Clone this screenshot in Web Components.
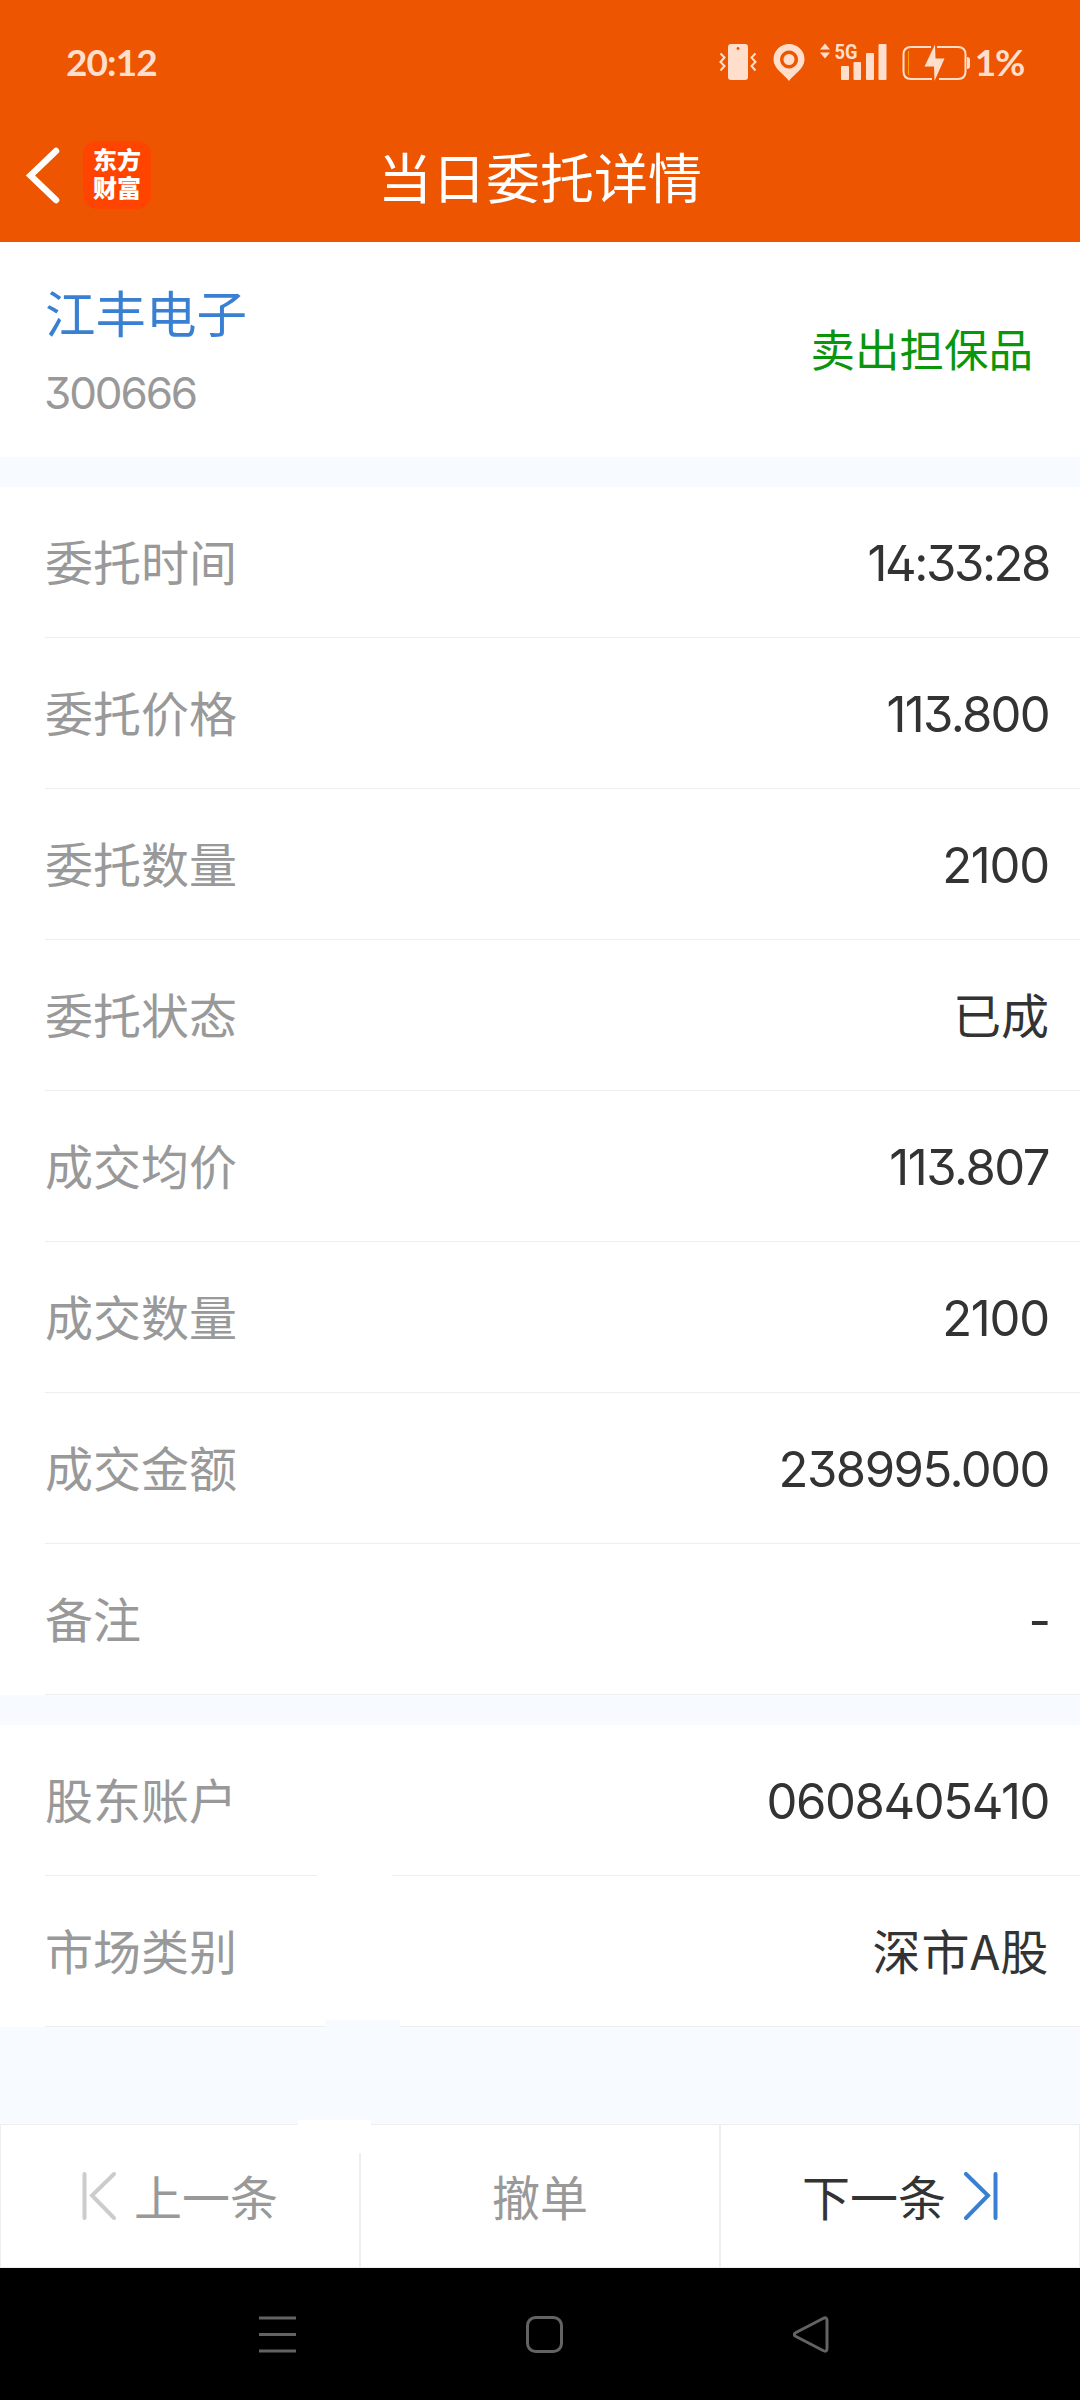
<!DOCTYPE html>
<html lang="zh-CN">
<head>
<meta charset="utf-8">
<title>当日委托详情</title>
<style>
  html, body {
    margin: 0;
    padding: 0;
  }
  body {
    width: 1080px;
    height: 2400px;
    overflow: hidden;
    background: #f7faff;
    font-family: Inter, "Noto Sans CJK SC", sans-serif;
    color: #333;
  }
</style>
</head>
<body>
<order-page>
  <status-bar slot="top" time="20:12" battery="1%"></status-bar>
  <title-bar slot="top">当日委托详情</title-bar>

  <stock-card code="300666">
    江丰电子
    <span slot="side">卖出担保品</span>
  </stock-card>

  <detail-group>
    <detail-row label="委托时间" tracking="-2.4">14:33:28</detail-row>
    <detail-row label="委托价格" tracking="-1.7">113.800</detail-row>
    <detail-row label="委托数量" tracking="-1.2">2100</detail-row>
    <detail-row label="委托状态" cjk>已成</detail-row>
    <detail-row label="成交均价" tracking="-1.5">113.807</detail-row>
    <detail-row label="成交数量" tracking="-1.2">2100</detail-row>
    <detail-row label="成交金额" tracking="-1.5">238995.000</detail-row>
    <detail-row label="备注" tracking="-2">-</detail-row>
  </detail-group>

  <detail-group>
    <detail-row label="股东账户" tracking="-1.4" broken>0608405410</detail-row>
    <detail-row label="市场类别" tracking="0.8" cjk notched>深市A股</detail-row>
  </detail-group>

  <pager-bar slot="bottom"></pager-bar>
  <nav-keys slot="bottom"></nav-keys>
</order-page>

<script>
class OrderPage extends HTMLElement {
  constructor() {
    super();
    this.attachShadow({ mode: "open" });
    this.shadowRoot.innerHTML = `
            <style>
                :host {
                    display: flex;
                    flex-direction: column;
                    width: 1080px;
                    height: 2400px;
                }

                header {
                    background: #ed5500;
                    height: 242px;
                }

                main {
                    flex: 1;
                    display: flex;
                    flex-direction: column;
                    gap: 30px;
                }
            </style>
            <header><slot name="top"></slot></header>
            <main><slot></slot></main>
            <footer><slot name="bottom"></slot></footer>
        `;
  }
}

class StatusBar extends HTMLElement {
  constructor() {
    super();
    this.attachShadow({ mode: "open" });
    this.shadowRoot.innerHTML = `
            <style>
                :host {
                    display: flex;
                    justify-content: space-between;
                    align-items: center;
                    box-sizing: border-box;
                    height: 124px;
                    padding: 0 56px 0 66px;
                    color: #ffdfcc;
                    font: 700 37px/1 Lato, sans-serif;
                }

                .tray {
                    display: flex;
                    align-items: center;
                }

                svg {
                    display: block;
                    overflow: visible;
                    fill: currentColor;
                }

                .line {
                    fill: none;
                    stroke: currentColor;
                    stroke-width: 2;
                }

                .net {
                    font: 700 21px Roboto, sans-serif;
                }

                #time {
                    margin-bottom: 2px;
                    letter-spacing: -0.9px;
                }

                #battery {
                    margin: 0 0 1px 4px;
                    letter-spacing: -1.3px;
                }
            </style>
            <span id="time"></span>
            <div class="tray">
                <svg width="54" height="40" viewBox="718 42 54 40">
                    <path fill-rule="evenodd" d="M730 44h14q3 0 3 3v30q0 3-3 3h-14q-3 0-3-3V47q0-3 3-3zM737 47a1.5 1.5 0 1 0 .1 0z"/>
                    <path class="line" d="M719.500 53.500l4 4-4 4.500 4 4-4 4.500M754.500 53.500l-4 4 4 4.500-4 4 4 4.500"/>
                </svg>
                <svg width="47" height="40" viewBox="772 42 47 40">
                    <path fill-rule="evenodd" d="M788 81C784 75 772.500 69 772.500 59.500a15.500 15.500 0 0 1 31 0C803.500 69 792 75 788 81zM788 50.500a9 9 0 1 0 .1 0z"/>
                    <circle cx="788" cy="59.500" r="5.500"/>
                </svg>
                <svg width="82" height="40" viewBox="819 42 82 40">
                    <path d="M819 49.500l5-6 5 6zM819 52.500h10l-5 6z"/>
                    <text class="net" x="833.500" y="59" textLength="23" lengthAdjust="spacingAndGlyphs">5G</text>
                    <rect x="840" y="66" width="8" height="14" rx="1"/>
                    <rect x="852.500" y="62" width="7.500" height="18" rx="1"/>
                    <rect x="865" y="53" width="8" height="27" rx="1"/>
                    <rect x="877.500" y="44" width="8" height="36" rx="1"/>
                </svg>
                <svg width="69" height="40" viewBox="901 42 69 40">
                    <path class="line" d="M930 47h-20q-7.500 0-7.500 7.500v17q0 7.500 7.500 7.500h21M938 79h19q7.500 0 7.500-7.500v-17q0-7.500-7.500-7.500h-21"/>
                    <path d="M966 57q3 0 3 3v6q0 3-3 3z"/>
                    <path fill="#ffa000" d="M907 51h1v24h-1z"/>
                    <path d="M934 44.500L923.500 66.500H933L933.500 81L943.500 58.500H934.500z"/>
                </svg>
                <span id="battery"></span>
            </div>
        `;
  }

  connectedCallback() {
    this.shadowRoot.querySelector("#time").textContent = this.getAttribute("time");
    this.shadowRoot.querySelector("#battery").textContent = this.getAttribute("battery");
  }
}

class TitleBar extends HTMLElement {
  constructor() {
    super();
    this.attachShadow({ mode: "open" });
    this.shadowRoot.innerHTML = `
            <style>
                :host {
                    display: grid;
                    grid-template-columns: 1fr auto 1fr;
                    align-items: center;
                    height: 104px;
                    color: #fff;
                }

                .left {
                    display: flex;
                    align-items: center;
                    gap: 21px;
                    padding: 0 0 3px 25px;
                }

                .logo {
                    display: flex;
                    flex-direction: column;
                    justify-content: center;
                    align-items: center;
                    box-sizing: border-box;
                    width: 68px;
                    height: 68px;
                    padding-bottom: 3px;
                    border-radius: 14px;
                    background: #ff4400;
                    font: 900 24px/28px "Noto Sans CJK SC", sans-serif;
                }

                h1 {
                    margin: 0 0 1px;
                    font: 400 54px/80px "Noto Sans CJK SC", sans-serif;
                }
            </style>
            <div class="left">
                <svg width="37" height="60" viewBox="25 144 37 60" fill="none" stroke="#fff" stroke-width="6.500" stroke-linecap="round">
                    <path d="M56 150L30.500 174.500L56 199"/>
                </svg>
                <div class="logo"><span>东方</span><span>财富</span></div>
            </div>
            <h1><slot></slot></h1>
        `;
  }
}

class StockCard extends HTMLElement {
  constructor() {
    super();
    this.attachShadow({ mode: "open" });
    this.shadowRoot.innerHTML = `
            <style>
                :host {
                    display: flex;
                    justify-content: space-between;
                    align-items: center;
                    box-sizing: border-box;
                    height: 215px;
                    padding: 0 47px 0 45px;
                    background: #fff;
                }

                .name {
                    margin-top: 5px;
                    font: 400 50.500px/70px "Noto Sans CJK SC", sans-serif;
                    color: #3a80d2;
                }

                #code {
                    margin: 12px 0 0 -1px;
                    font-size: 44px;
                    line-height: 70px;
                    letter-spacing: -2.1px;
                    font-feature-settings: "cv09";
                    color: #999;
                }

                .side {
                    margin-bottom: 3px;
                    font: 400 44.500px/64px "Noto Sans CJK SC", sans-serif;
                    color: #0a960a;
                }
            </style>
            <div>
                <div class="name"><slot></slot></div>
                <div id="code"></div>
            </div>
            <div class="side"><slot name="side"></slot></div>
        `;
  }

  connectedCallback() {
    this.shadowRoot.querySelector("#code").textContent = this.getAttribute("code");
  }
}

class DetailGroup extends HTMLElement {
  constructor() {
    super();
    this.attachShadow({ mode: "open" });
    this.shadowRoot.innerHTML = `
            <style>
                :host {
                    display: block;
                    background: #fff;
                }
            </style>
            <slot></slot>
        `;
  }
}

class DetailRow extends HTMLElement {
  constructor() {
    super();
    this.attachShadow({ mode: "open" });
    this.shadowRoot.innerHTML = `
            <style>
                :host {
                    display: block;
                    position: relative;
                    height: 151px;
                    padding-left: 45px;
                }

                .row {
                    display: flex;
                    justify-content: space-between;
                    align-items: center;
                    box-sizing: border-box;
                    height: 151px;
                    padding-right: 31px;
                    border-bottom: 1px solid #eee;
                }

                #label {
                    margin-bottom: 4px;
                    font: 400 48px/70px "Noto Sans CJK SC", sans-serif;
                    color: #999;
                }

                #value {
                    margin-top: 4px;
                    font-size: 49px;
                    line-height: 70px;
                    font-feature-settings: "cv02", "cv09";
                    color: #333;
                }

                :host([cjk]) #value {
                    margin: 0 0 4px;
                    font: 400 48px/70px "Noto Sans CJK SC", sans-serif;
                }

                /* erased stretch of the divider */
                :host([broken])::after, :host([notched])::after {
                    content: "";
                    position: absolute;
                    bottom: 0;
                    left: 317px;
                    width: 75px;
                    height: 1px;
                    background: #fff;
                }

                :host([notched])::after {
                    left: 325px;
                    height: 7px;
                    background: #f7faff;
                }
            </style>
            <div class="row">
                <span id="label"></span>
                <span id="value"><slot></slot></span>
            </div>
        `;
  }

  connectedCallback() {
    this.shadowRoot.querySelector("#label").textContent = this.getAttribute("label");
    const tracking = this.getAttribute("tracking");
    if (tracking) {
      this.shadowRoot.querySelector("#value").style.letterSpacing = tracking + "px";
    }
  }
}

class PagerBar extends HTMLElement {
  constructor() {
    super();
    this.attachShadow({ mode: "open" });
    this.shadowRoot.innerHTML = `
            <style>
                :host {
                    display: grid;
                    grid-template-columns: repeat(3, 1fr);
                    position: relative;
                    height: 144px;
                    background: #fff;
                }

                button {
                    display: flex;
                    justify-content: center;
                    align-items: center;
                    gap: 18px;
                    margin: 0;
                    padding: 0;
                    border: 1px solid #eee;
                    background: none;
                    font: 400 48px/70px "Noto Sans CJK SC", sans-serif;
                    color: #999;
                }

                button span {
                    margin-bottom: 3px;
                }

                .next {
                    color: #333;
                }

                svg {
                    display: block;
                    fill: none;
                    stroke-width: 4;
                    stroke-linecap: round;
                }

                /* blank areas over the top edge and the first divider */
                .patch {
                    position: absolute;
                    background: #fff;
                    left: 298px;
                    top: -4px;
                    width: 73px;
                    height: 33px;
                }
            </style>
            <button>
                <svg width="34" height="48" stroke="#ccc"><path d="M2.500 2V46M32 2L10 23.500L32 46"/></svg>
                <span>上一条</span>
            </button>
            <button><span>撤单</span></button>
            <button class="next">
                <span>下一条</span>
                <svg width="34" height="48" stroke="#3a80d2"><path d="M31.500 2V46M2 2L24 23.500L2 46"/></svg>
            </button>
            <div class="patch"></div>
        `;
  }
}

class NavKeys extends HTMLElement {
  constructor() {
    super();
    this.attachShadow({ mode: "open" });
    this.shadowRoot.innerHTML = `
            <style>
                :host {
                    display: flex;
                    justify-content: center;
                    align-items: center;
                    gap: 230px;
                    box-sizing: border-box;
                    height: 132px;
                    padding-left: 8px;
                    background: #000;
                }

                svg {
                    display: block;
                    fill: none;
                    stroke: #636363;
                    stroke-width: 3;
                    stroke-linejoin: round;
                }
            </style>
            <svg width="37" height="37"><path d="M0 2H37M0 18.500H37M0 35H37"/></svg>
            <svg width="37" height="37"><rect x="1.500" y="1.500" width="34" height="34" rx="8"/></svg>
            <svg width="37" height="37"><path d="M30 2.500Q34 .5 34 4.500V32.500Q34 36.500 30 34.500L3 20.500Q-.5 18.500 3 16.500z"/></svg>
        `;
  }
}

customElements.define("order-page", OrderPage);
customElements.define("status-bar", StatusBar);
customElements.define("title-bar", TitleBar);
customElements.define("stock-card", StockCard);
customElements.define("detail-group", DetailGroup);
customElements.define("detail-row", DetailRow);
customElements.define("pager-bar", PagerBar);
customElements.define("nav-keys", NavKeys);
</script>
</body>
</html>
